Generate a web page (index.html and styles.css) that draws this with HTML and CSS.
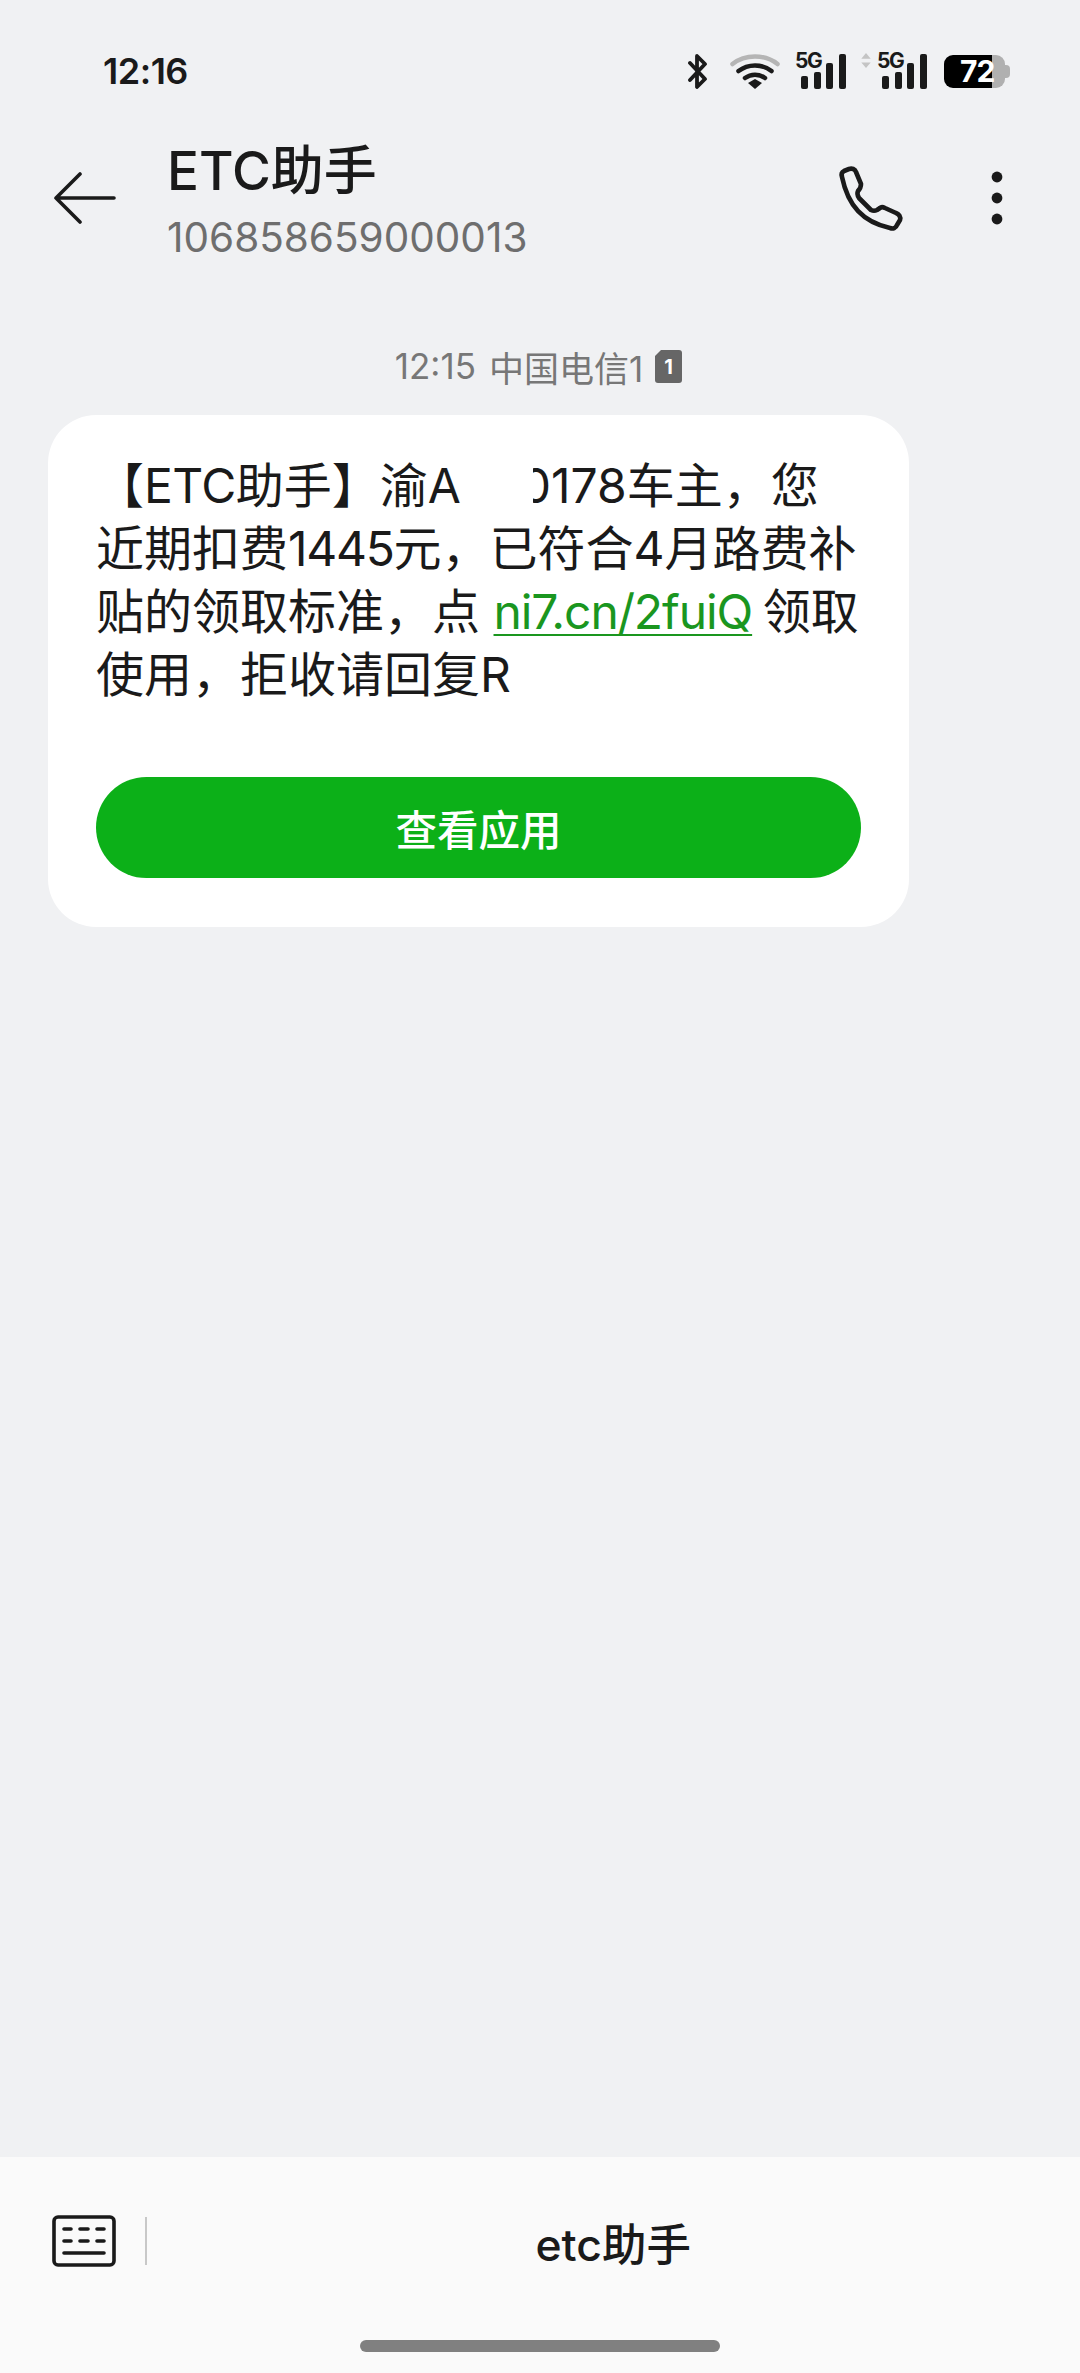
FILE: index.html
```html
<!DOCTYPE html>
<html lang="zh-CN">
<head>
<meta charset="utf-8">
<title>ETC助手</title>
<link rel="stylesheet" href="styles.css">
</head>
<body>
<div class="phone">
  <div class="status">
    <span class="clock">12:16</span>
    <div class="status-icons">
      <svg class="ic-bt" viewBox="0 0 22 36"><path d="M3 10 L18 26 L10 34 V3 L18 11 L3 27" fill="none" stroke="#1a1a1a" stroke-width="3.8" stroke-linecap="round" stroke-linejoin="round"/></svg>
      <svg class="ic-wifi" viewBox="0 0 50 36"><path d="M2.5 11 C15 1 35 1 47.5 11" fill="none" stroke="#b5b5b5" stroke-width="4.5" stroke-linecap="round"/><path d="M8.5 18 C18 10.500 32 10.500 41.500 18" fill="none" stroke="#1a1a1a" stroke-width="4.500" stroke-linecap="round"/><path d="M15 25 C21 20.500 29 20.500 35 25" fill="none" stroke="#1a1a1a" stroke-width="4.500" stroke-linecap="round"/><path d="M18 30 L25 26 L32 30 L25 36 Z" fill="#1a1a1a"/></svg>
      <div class="sig"><span class="g5">5G</span><i class="b b1"></i><i class="b b2"></i><i class="b b3"></i><i class="b b4"></i></div>
      <div class="sig sig2"><svg class="updown" viewBox="0 0 10 16"><path d="M5 0 L10 6 H0 Z M5 16 L0 10 H10 Z" fill="#c4c4c4"/></svg><span class="g5">5G</span><i class="b b1"></i><i class="b b2"></i><i class="b b3"></i><i class="b b4"></i></div>
      <div class="batt"><span class="batt-fill"></span><span class="batt-rest"></span><span class="batt-nub"></span><span class="batt-num">72</span></div>
    </div>
  </div>

  <header class="head">
    <svg class="ic-back" viewBox="0 0 62 52"><path d="M26 2 L2 26 L26 50 M2 26 H60" fill="none" stroke="#1a1a1a" stroke-width="3.6" stroke-linecap="round" stroke-linejoin="round"/></svg>
    <div class="who">
      <div class="name">ETC助手</div>
      <div class="num">106858659000013</div>
    </div>
    <svg class="ic-phone" viewBox="55 33 70 70"><path d="M61 47 C60 44 61 42 63 41 L68 39 C71 38 74 39 75 42 L80 54 C80 57 79 59 77 61 C76 63 76 65 78 68 L90 80 C92 81 94 81 96 80 L99 78 C100 77 102 77 104 78 L115 83 C118 84 120 87 119 90 L116 95 C115 98 112 99 109 98 C82 92 67 76 61 47 Z" fill="none" stroke="#1a1a1a" stroke-width="4.6" stroke-linejoin="round"/></svg>
    <svg class="ic-more" viewBox="0 0 12 54"><circle cx="6" cy="6" r="5.4" fill="#1a1a1a"/><circle cx="6" cy="27" r="5.4" fill="#1a1a1a"/><circle cx="6" cy="48" r="5.4" fill="#1a1a1a"/></svg>
  </header>

  <main class="thread">
    <div class="stamp"><span>12:15</span><span>中国电信1</span>
      <svg class="ic-sim" viewBox="0 0 27 33"><path d="M6 0 H24 Q27 0 27 3 V30 Q27 33 24 33 H3 Q0 33 0 30 V6 Z" fill="#666"/><text x="13.500" y="23.500" class="sim-num">1</text></svg>
    </div>
    <div class="bubble">
      <p class="msg">【<span class="tight">ETC</span>助手】渝A<span class="mask"></span>0178车主，您近期扣费<span class="tight2">1445</span>元，已符合4月路费补贴的领取标准，点 <a class="link">ni7.cn/2fuiQ</a> 领取使用，拒收请回复R</p>
      <div class="btn">查看应用</div>
    </div>
  </main>

  <footer class="composer">
    <div class="comp-row">
      <svg class="ic-kb" viewBox="0 0 64 52"><rect x="2" y="2" width="60" height="48" rx="4" fill="none" stroke="#1a1a1a" stroke-width="3.6"/><path d="M12 14 H19 M28 14 H36 M45 14 H52 M12 26 H19 M28 26 H36 M45 26 H52 M12 38 H52" stroke="#1a1a1a" stroke-width="3.6" stroke-linecap="round"/></svg>
      <span class="divider"></span>
      <span class="menu">etc助手</span>
    </div>
    <div class="home"></div>
  </footer>
</div>
</body>
</html>
```
FILE: styles.css
```css
* { box-sizing: border-box; }
html, body { margin: 0; padding: 0; }
body { font-family: Inter, "Noto Sans CJK SC", sans-serif; color: #1a1a1a; }
.phone { width: 1080px; height: 2373px; background: #f0f1f3; display: flex; flex-direction: column; overflow: hidden; }

.status { height: 72px; margin-top: 35px; padding: 0 70px 0 103px; display: flex; align-items: center; justify-content: space-between; }
.clock { font-size: 36px; font-weight: 600; letter-spacing: -0.5px; }
.status-icons { display: flex; align-items: center; }
.ic-bt { width: 22px; height: 36px; margin-right: 21px; }
.ic-wifi { width: 50px; height: 36px; margin-right: 15px; }
.sig { position: relative; width: 51px; height: 36px; display: flex; align-items: flex-end; gap: 5.600px; padding-left: 6px; margin-right: 15px; }
.sig2 { width: 66px; padding-left: 21px; margin-right: 17px; }
.g5 { position: absolute; left: 0; top: -3px; font-size: 21px; font-weight: 700; letter-spacing: -1.500px; line-height: 22px; }
.sig2 .g5 { left: 16px; }
.updown { position: absolute; left: 0; top: 0; width: 10px; height: 15px; }
.b { display: block; width: 7px; background: #1a1a1a; border-radius: 2px; flex: none; }
.b1 { height: 13px; } .b2 { height: 17px; } .b3 { height: 26px; } .b4 { height: 35px; }
.batt { position: relative; width: 66px; height: 33px; display: flex; align-items: center; }
.batt-fill { width: 48px; height: 33px; background: #000; border-radius: 9px 0 0 9px; }
.batt-rest { width: 13px; height: 33px; background: #b0b0b0; border-radius: 0 9px 9px 0; }
.batt-nub { width: 5px; height: 13px; background: #b0b0b0; border-radius: 0 4px 4px 0; }
.batt-num { position: absolute; left: 16px; top: 0; color: #fff; font-size: 30px; font-weight: 700; line-height: 33px; letter-spacing: -1px; }

.head { height: 112px; margin-top: 35px; padding: 0 77px 0 54px; display: flex; align-items: center; }
.ic-back { width: 62px; height: 52px; flex: none; }
.who { margin-left: 51px; margin-top: 7px; flex: 1; }
.name { font-size: 53px; line-height: 72px; font-weight: 500; }
.num { font-size: 40.500px; line-height: 61px; color: #6e6e6e; }
.ic-phone { width: 70px; height: 70px; flex: none; margin-right: 85.500px; }
.ic-more { width: 12px; height: 54px; flex: none; }

.thread { flex: 1; padding: 0 48px; }
.stamp { margin-top: 93px; height: 38px; padding-right: 3px; display: flex; align-items: center; justify-content: center; gap: 13px; color: #777; font-size: 35px; }
.ic-sim { width: 27px; height: 33px; margin-left: -1px; }
.sim-num { fill: #fff; font-size: 20px; font-weight: 700; text-anchor: middle; }

.bubble { margin-top: 30px; width: 861px; height: 512px; background: #fff; border-radius: 48px; padding: 39px 48px 0; }
.msg { margin: 0; font-size: 48px; line-height: 63px; height: 253px; }
.tight { letter-spacing: -0.600px; }
.tight2 { letter-spacing: -1.300px; }
.mask { display: inline-block; width: 72px; height: 50px; background: #fff; vertical-align: -8px; position: relative; margin-right: -12px; }
.link { color: #1a961f; text-decoration: underline; text-decoration-thickness: 2px; text-underline-offset: 5px; letter-spacing: -1.100px; margin-right: -3px; }
.btn { margin-top: 70px; height: 101px; width: 765px; border-radius: 51px; background: #0cb018; color: #fff; font-size: 41.500px; font-weight: 500; display: flex; align-items: center; justify-content: center; }

.composer { height: 216px; background: #fafafa; display: flex; flex-direction: column; align-items: center; }
.comp-row { width: 100%; margin-top: 58px; height: 52px; display: flex; align-items: center; padding-left: 52px; }
.ic-kb { width: 64px; height: 52px; flex: none; }
.divider { width: 1.500px; height: 48px; background: #c8c8c8; margin-left: 29px; flex: none; }
.menu { flex: 1; text-align: center; font-size: 44.500px; font-weight: 500; }
.home { margin-top: 73px; width: 360px; height: 12px; border-radius: 6px; background: #808080; }
```
